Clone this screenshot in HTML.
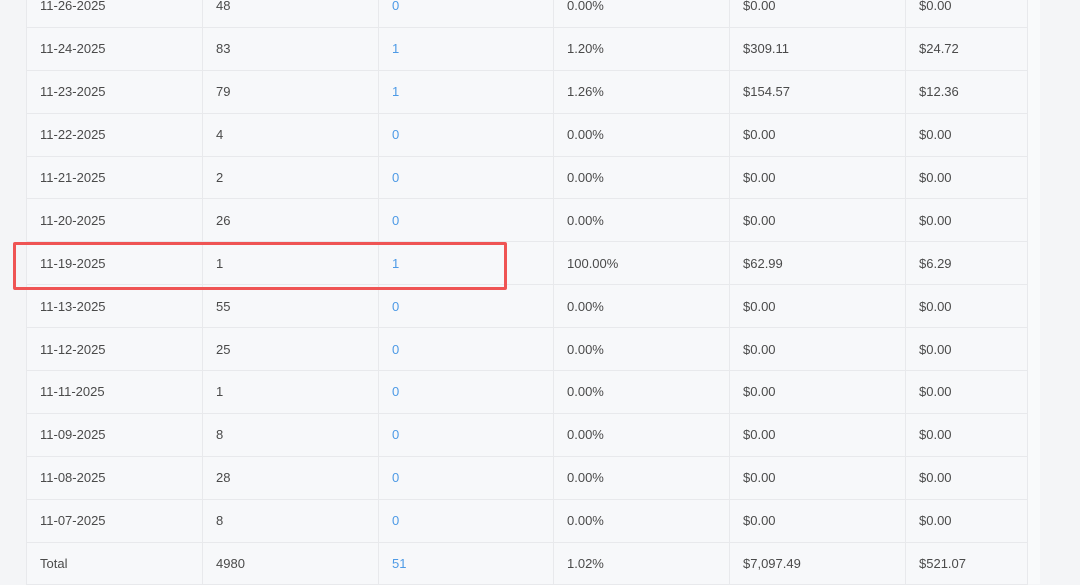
<!DOCTYPE html>
<html><head><meta charset="utf-8"><style>
html,body{margin:0;padding:0;width:1080px;height:584px;overflow:hidden;background:#f4f5f7;font-family:"Liberation Sans","Noto Sans CJK SC",sans-serif;}
.wrap{position:absolute;left:26px;top:-16px;width:1000px;}
.side{position:absolute;left:1026px;top:0;width:14px;height:584px;background:#f9fafb;}
.side2{position:absolute;left:1040px;top:0;width:40px;height:584px;background:#f4f5f7;}
table{border-collapse:collapse;width:1001px;table-layout:fixed;background:#f7f8fa;}
td{height:41.9px;border:1px solid #e8e9ec;padding:0 0 0 13px;font-size:13px;color:#4a4a4a;white-space:nowrap;}
td.b{color:#4d9ae6;}
.red{position:absolute;left:13px;top:242px;width:488px;height:42px;border:3px solid #ef5454;border-radius:2px;}
</style></head><body>
<div class="side"></div><div class="side2"></div>
<div class="wrap"><table>
<colgroup><col style="width:176px"><col style="width:176px"><col style="width:175px"><col style="width:176px"><col style="width:176px"><col style="width:122px"></colgroup>
<tr><td>11-26-2025</td><td>48</td><td class="b">0</td><td>0.00%</td><td>$0.00</td><td>$0.00</td></tr>
<tr><td>11-24-2025</td><td>83</td><td class="b">1</td><td>1.20%</td><td>$309.11</td><td>$24.72</td></tr>
<tr><td>11-23-2025</td><td>79</td><td class="b">1</td><td>1.26%</td><td>$154.57</td><td>$12.36</td></tr>
<tr><td>11-22-2025</td><td>4</td><td class="b">0</td><td>0.00%</td><td>$0.00</td><td>$0.00</td></tr>
<tr><td>11-21-2025</td><td>2</td><td class="b">0</td><td>0.00%</td><td>$0.00</td><td>$0.00</td></tr>
<tr><td>11-20-2025</td><td>26</td><td class="b">0</td><td>0.00%</td><td>$0.00</td><td>$0.00</td></tr>
<tr><td>11-19-2025</td><td>1</td><td class="b">1</td><td>100.00%</td><td>$62.99</td><td>$6.29</td></tr>
<tr><td>11-13-2025</td><td>55</td><td class="b">0</td><td>0.00%</td><td>$0.00</td><td>$0.00</td></tr>
<tr><td>11-12-2025</td><td>25</td><td class="b">0</td><td>0.00%</td><td>$0.00</td><td>$0.00</td></tr>
<tr><td>11-11-2025</td><td>1</td><td class="b">0</td><td>0.00%</td><td>$0.00</td><td>$0.00</td></tr>
<tr><td>11-09-2025</td><td>8</td><td class="b">0</td><td>0.00%</td><td>$0.00</td><td>$0.00</td></tr>
<tr><td>11-08-2025</td><td>28</td><td class="b">0</td><td>0.00%</td><td>$0.00</td><td>$0.00</td></tr>
<tr><td>11-07-2025</td><td>8</td><td class="b">0</td><td>0.00%</td><td>$0.00</td><td>$0.00</td></tr>
<tr><td>Total</td><td>4980</td><td class="b">51</td><td>1.02%</td><td>$7,097.49</td><td>$521.07</td></tr>
</table></div>
<div class="red"></div>
</body></html>
